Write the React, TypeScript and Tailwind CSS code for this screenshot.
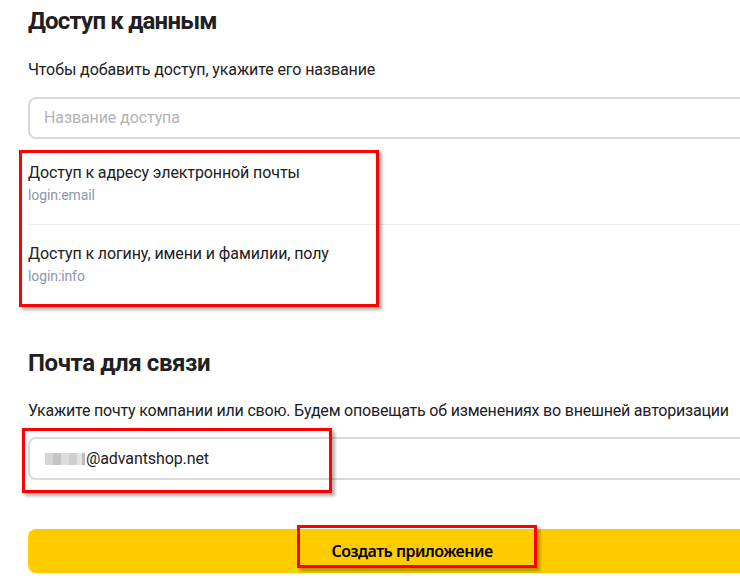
export default function App() {
  return (
    <div className="w-[740px] h-[581px] overflow-hidden bg-white relative" style={{ fontFamily: 'Roboto, "Noto Sans", sans-serif' }}>
      <div className="w-[768px] ml-[28px] text-[#21201f] tracking-[-0.1px]">
        {/* Доступ к данным */}
        <h2 className="mt-[3px] text-[24px] leading-[36px] font-bold tracking-[-0.8px]">Доступ к данным</h2>
        <p className="mt-[21px] text-[16px] leading-[20px]">Чтобы добавить доступ, укажите его название</p>
        <div className="mt-[17px] h-[42px] rounded-[8px] border-2 border-[#d9d9d9] flex items-center px-[14px]">
          <span className="text-[16px] text-[#b3b3b3]">Название доступа</span>
        </div>

        <div className="mt-[24px] flex flex-col">
          <div className="flex flex-col pb-[20px] border-b border-[#e8e8ee]">
            <span className="text-[16px] leading-[20px]">Доступ к адресу электронной почты</span>
            <span className="mt-[3px] text-[14px] leading-[18px] text-[#8f96a8]">login:email</span>
          </div>
          <div className="flex flex-col pt-[19px]">
            <span className="text-[16px] leading-[20px]">Доступ к логину, имени и фамилии, полу</span>
            <span className="mt-[3px] text-[14px] leading-[18px] text-[#8f96a8]">login:info</span>
          </div>
        </div>

        {/* Почта для связи */}
        <h2 className="mt-[60px] text-[24px] leading-[36px] font-bold tracking-[-0.4px]">Почта для связи</h2>
        <p className="mt-[20px] text-[16px] leading-[20px] tracking-[-0.2px] whitespace-nowrap">Укажите почту компании или свою. Будем оповещать об изменениях во внешней авторизации</p>
        <div className="mt-[16px] h-[43px] rounded-[8px] border-2 border-[#d9d9d9] flex items-center px-[15px]">
          <span className="flex items-center h-[14px] mr-[1px]">
            <span className="w-[8px] h-[12px] bg-[#d5d5d5]" />
            <span className="w-[8px] h-[12px] bg-[#c4c4c6]" />
            <span className="w-[8px] h-[12px] bg-[#dcdcdc]" />
            <span className="w-[8px] h-[12px] bg-[#cfcfd1]" />
            <span className="w-[5px] h-[12px] bg-[#e3e3e3]" />
            <span className="w-[3px] h-[12px] bg-[#bdbdbd]" />
          </span>
          <span className="text-[16px]">@advantshop.net</span>
        </div>

        <div className="mt-[49px] h-[44px] rounded-[8px] bg-[#ffcc00] flex items-center justify-center">
          <span className="text-[16px] font-semibold tracking-[-0.5px] text-black" style={{ fontFamily: '"Noto Sans", sans-serif' }}>Создать приложение</span>
        </div>
      </div>

      {/* red annotation frames */}
      <div className="absolute left-[19px] top-[150px] w-[360px] h-[157px] border-[3px] border-[#ff0000] shadow-[3px_3px_3px_rgba(0,0,0,0.3)]" />
      <div className="absolute left-[22px] top-[428px] w-[310px] h-[65px] border-[3px] border-[#ff0000] shadow-[3px_3px_3px_rgba(0,0,0,0.3)]" />
      <div className="absolute left-[297px] top-[525px] w-[240px] h-[43px] border-[3px] border-[#ff0000] shadow-[3px_3px_3px_rgba(0,0,0,0.3)]" />
    </div>
  );
}
